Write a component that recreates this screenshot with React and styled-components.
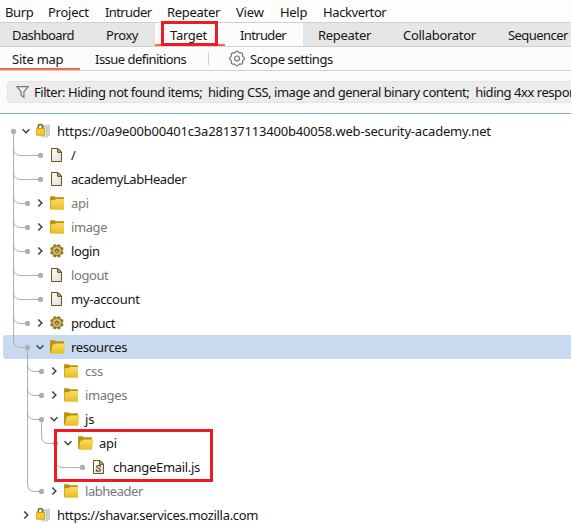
import React from "react";
import styled, { createGlobalStyle } from "styled-components";

const Global = createGlobalStyle`
  * { box-sizing: border-box; }
  html, body { margin: 0; padding: 0; background: #fff; overflow: hidden; }
  svg { flex: none; }
`;

const Window = styled.div`
  position: relative;
  width: 571px;
  height: 532px;
  overflow: hidden;
  background: #fff;
  color: #151515;
  font-family: "Noto Sans", sans-serif;
  font-size: 13px;
  line-height: 18px;
  white-space: pre;
`;

const MenuBar = styled.nav`
  display: flex;
  height: 23px;
  padding: 3px 0 0 5px;
  background: #fdfdfd;
  border-bottom: 1px solid #cdd2d2;
`;

const MenuItem = styled.span`
  flex: none;
  width: ${(p) => p.$w}px;
  letter-spacing: ${(p) => p.$ls || 0}px;
`;

const TabBar = styled.div`
  display: flex;
  height: 24px;
  background: #e6e6e6;
  border-bottom: 1px solid #cdd2d2;
`;

const Tab = styled.div`
  flex: none;
  width: ${(p) => p.$w}px;
  height: 23px;
  padding: 3px 0 0 ${(p) => p.$pad || 15}px;
  background: ${(p) => (p.$light ? "#fcfcfc" : "transparent")};
  border-bottom: 2px solid ${(p) => (p.$active ? "#ff6633" : "transparent")};
  letter-spacing: ${(p) => p.$ls || 0}px;
`;

const SubBar = styled.div`
  display: flex;
  height: 24px;
  background: #fcfcfc;
  border-bottom: 1px solid #cdd2d2;
`;

const SubTab = styled.div`
  width: ${(p) => p.$w}px;
  height: 23px;
  padding: 3px 0 0 ${(p) => p.$pad}px;
  border-bottom: 2px solid ${(p) => (p.$active ? "#ff6633" : "transparent")};
  letter-spacing: ${(p) => p.$ls || 0}px;
`;

const Divider = styled.div`
  width: 1px;
  height: 13px;
  margin: 5px 20px 0 0;
  background: #cdd2d2;
`;

const Scope = styled.div`
  display: flex;
  gap: 5px;
  padding-top: 3px;
  letter-spacing: -0.4px;
`;

const FilterPane = styled.div`
  height: 43px;
  padding: 10px 0 0 7px;
  background: #fbfbfb;
  border-bottom: 1px solid #7ba7cf;
`;

const Filter = styled.div`
  display: flex;
  align-items: center;
  gap: 5px;
  width: 570px;
  height: 22px;
  padding-left: 8px;
  background: #ececec;
  border: 1px solid #e4e4e4;
  border-radius: 4px;
  letter-spacing: -0.46px;
`;

const Tree = styled.div`
  padding-top: 5px;
`;

const Row = styled.div`
  display: flex;
  align-items: center;
  height: 24px;
  margin-left: 3px;
  background: ${(p) => (p.$selected ? "#c9daf0" : "transparent")};
  border-radius: 4px 0 0 4px;
`;

const GuideSvg = styled.svg`
  flex: none;
  margin-left: -3px;
`;

const Slot = styled.div`
  display: flex;
  flex: none;
  width: ${(p) => p.$w}px;
  height: 24px;
  align-items: center;
`;

const Label = styled.span`
  color: ${(p) => (p.$dim ? "#77777a" : "#151515")};
  letter-spacing: ${(p) => p.$ls || 0}px;
`;

const Highlight = styled.div`
  position: absolute;
  left: ${(p) => p.$x}px;
  top: ${(p) => p.$y}px;
  width: ${(p) => p.$w}px;
  height: ${(p) => p.$h}px;
  border: 3px solid #ed1c24;
`;

function Guides({ depth, leaf, lines = [], elbow, dot = true, down }) {
  const width = (leaf ? 32 : 20) + 14 * depth;
  const dotX = (leaf ? 26.5 : 13.5) + 14 * depth;
  const parentX = -0.5 + 14 * depth;
  return (
    <GuideSvg width={width} height="24" fill="none" stroke="#afafaf">
      {lines.map((d) => (
        <path key={d} d={`M${13.5 + 14 * d} 0V24`} />
      ))}
      {elbow && <path d={`M${parentX} 0V5Q${parentX} 12.5 ${parentX + 7.5} 12.5H${dotX}`} />}
      {down && <path d={`M${dotX} 12V24`} />}
      {dot && <circle cx={dotX} cy="12.4" r="2.6" fill="#afafaf" stroke="none" />}
    </GuideSvg>
  );
}

function Chevron({ open }) {
  return (
    <svg width="12" height="12" fill="none" stroke="#3f4142" strokeWidth="1.5">
      <path d={open ? "M2.5 4.2L6 7.7L9.5 4.2" : "M4.3 2.5L7.8 6L4.3 9.5"} />
    </svg>
  );
}

function Folder({ open }) {
  return (
    <svg width="17" height="16">
      <defs>
        <linearGradient id="folderFill" x1="0" y1="0" x2="0" y2="1">
          <stop offset="0" stopColor="#f8dc62" />
          <stop offset="1" stopColor="#e9bd25" />
        </linearGradient>
      </defs>
      <path d="M0 1.9Q0 1.2 .7 1.2H4.5L5.7 2.3H13.2Q14 2.3 14 3.2V14H0Z" fill="#bd910c" />
      <path
        d={open ? "M4.6 5.6L5.8 4.6H15.6L13.8 14.8H.6L2.6 5.6Z" : "M.6 5.2H4.8L6 4H14V14.8H.6Z"}
        fill="url(#folderFill)"
      />
    </svg>
  );
}

function Page({ script }) {
  return (
    <svg width="14" height="16">
      <defs>
        <linearGradient id="pageFill" x1="0" y1="0" x2="1" y2="1">
          <stop offset="0" stopColor="#ffffff" />
          <stop offset="1" stopColor="#dedbe2" />
        </linearGradient>
      </defs>
      <path d="M1.5 1.5H8L11.5 5V14.5H1.5Z" fill="url(#pageFill)" stroke="#68561c" />
      <path d="M7.6 1.5V5.4H11.5Z" fill="#cbb873" stroke="#68561c" />
      {script && (
        <path
          d="M8.4 6.2V8.2M8.2 7.2C7.4 6.1 4.7 6.2 4.7 7.9C4.7 9.6 8.3 9 8.3 10.9C8.3 12.7 5.4 12.5 4.5 11.4M4.3 10.3V12.6"
          fill="none"
          stroke="#514012"
          strokeWidth="1.1"
        />
      )}
    </svg>
  );
}

const TEETH = [0, 45, 90, 135, 180, 225, 270, 315];

function GoldGear() {
  return (
    <svg width="15" height="16">
      <g transform="translate(6.9 7.8)">
        {TEETH.map((a) => (
          <rect key={a} x="-1.6" y="-6.8" width="3.2" height="4" rx="0.9" fill="#94782a" transform={`rotate(${a + 22.5})`} />
        ))}
        <circle r="5" fill="#bb9b3e" stroke="#8a6c20" strokeWidth="0.8" />
        <circle r="3.4" fill="#d0b563" stroke="#e2cf88" strokeWidth="0.7" />
        <circle r="1.6" fill="#a58535" stroke="#6a5110" strokeWidth="0.9" />
        <circle cy="0.5" r="0.6" fill="#fff8da" />
      </g>
    </svg>
  );
}

function SecureHost() {
  return (
    <svg width="15" height="16">
      <path d="M5 3.5L7.5 1.7H13.7V12L11.5 14.2H5Z" fill="#d9d9d9" />
      <path d="M5.5 3.8H10.8V14H5.5Z" fill="#e4e4e4" stroke="#c0c0c0" strokeWidth="0.6" />
      <path d="M10.8 4L13.6 2V12L10.8 14Z" fill="#d2d2d2" stroke="#c0c0c0" strokeWidth="0.6" />
      <path d="M2.2 7V4C2.2 .7 6.8 .7 6.8 4V7" fill="none" stroke="#7c681c" strokeWidth="1.5" />
      <rect x="0.4" y="5.5" width="8.2" height="6.7" rx="0.5" fill="#f7ca27" stroke="#c79811" strokeWidth="0.8" />
    </svg>
  );
}

function Cog() {
  const points = Array.from({ length: 64 }, (_, i) => {
    const a = (i / 64) * Math.PI * 2;
    const r = 6.75 + 0.6 * Math.tanh(2.5 * Math.cos(8 * a));
    return `${(8 + r * Math.cos(a)).toFixed(2)},${(8.5 + r * Math.sin(a)).toFixed(2)}`;
  }).join(" ");
  return (
    <svg width="16" height="17" fill="none" stroke="#777777" strokeWidth="1.2">
      <polygon points={points} />
      <circle cx="8" cy="8.5" r="2.5" />
    </svg>
  );
}

function Funnel() {
  return (
    <svg width="13" height="14" fill="none" stroke="#777777" strokeWidth="1.2">
      <path d="M0.9 1.6H12.1L7.9 7V12.2L5.1 10.4V7Z" />
    </svg>
  );
}

const ICONS = {
  host: <SecureHost />,
  page: <Page />,
  script: <Page script />,
  folder: <Folder />,
  folderOpen: <Folder open />,
  gear: <GoldGear />,
};

const ROWS = [
  { text: "https://0a9e00b00401c3a28137113400b40058.web-security-academy.net", ls: -0.18, depth: 0, icon: "host", open: true, down: true },
  { text: "/", depth: 1, icon: "page", leaf: true, elbow: true, lines: [0] },
  { text: "academyLabHeader", ls: -0.43, depth: 1, icon: "page", leaf: true, elbow: true, lines: [0] },
  { text: "api", ls: -0.3, depth: 1, icon: "folder", dim: true, elbow: true, lines: [0] },
  { text: "image", ls: -0.4, depth: 1, icon: "folder", dim: true, elbow: true, lines: [0] },
  { text: "login", ls: -0.4, depth: 1, icon: "gear", elbow: true, lines: [0] },
  { text: "logout", ls: -0.4, depth: 1, icon: "page", leaf: true, dim: true, elbow: true, lines: [0] },
  { text: "my-account", ls: -0.28, depth: 1, icon: "page", leaf: true, elbow: true, lines: [0] },
  { text: "product", ls: -0.6, depth: 1, icon: "gear", elbow: true, lines: [0] },
  { text: "resources", ls: -0.38, depth: 1, icon: "folderOpen", open: true, selected: true, elbow: true, down: true },
  { text: "css", ls: -0.2, depth: 2, icon: "folder", dim: true, elbow: true, lines: [1] },
  { text: "images", ls: -0.4, depth: 2, icon: "folder", dim: true, elbow: true, lines: [1] },
  { text: "js", depth: 2, icon: "folderOpen", open: true, elbow: true, lines: [1], down: true },
  { text: "api", ls: -0.3, depth: 3, icon: "folderOpen", open: true, elbow: true, lines: [1], down: true },
  { text: "changeEmail.js", ls: -0.32, depth: 4, icon: "script", leaf: true, elbow: true, lines: [1] },
  { text: "labheader", ls: -0.46, depth: 2, icon: "folder", dim: true, elbow: true },
  { text: "https://shavar.services.mozilla.com", ls: -0.32, depth: 0, icon: "host", dot: false },
];

const MENU = [
  ["Burp", 43, -0.4], ["Project", 57, -0.25], ["Intruder", 62, -0.6], ["Repeater", 69, -0.3],
  ["View", 44, -0.2], ["Help", 43, -0.3], ["Hackvertor", 90, -0.4],
];

const TABS = [
  { text: "Dashboard", w: 90, pad: 12, ls: -0.6 },
  { text: "Proxy", w: 65, pad: 16, ls: -0.4 },
  { text: "Target", w: 70, light: true, active: true, ls: -0.3 },
  { text: "Intruder", w: 78, light: true, ls: -0.65 },
  { text: "Repeater", w: 84, ls: -0.3 },
  { text: "Collaborator", w: 105, pad: 16, ls: -0.28 },
  { text: "Sequencer", w: 79, pad: 16, ls: -0.55 },
];

export default function App() {
  return (
    <Window>
      <Global />
      <MenuBar>
        {MENU.map(([text, w, ls]) => (
          <MenuItem key={text} $w={w} $ls={ls}>{text}</MenuItem>
        ))}
      </MenuBar>
      <TabBar>
        {TABS.map((t) => (
          <Tab key={t.text} $w={t.w} $pad={t.pad} $light={t.light} $active={t.active} $ls={t.ls}>{t.text}</Tab>
        ))}
      </TabBar>
      <SubBar>
        <SubTab $w={80} $pad={12} $ls={-0.25} $active>Site map</SubTab>
        <SubTab $w={128} $pad={15} $ls={-0.53}>Issue definitions</SubTab>
        <Divider />
        <Scope><Cog />Scope settings</Scope>
      </SubBar>
      <FilterPane>
        <Filter>
          <Funnel />
          <span>Filter: Hiding not found items;  hiding CSS, image and general binary content;  hiding 4xx respon</span>
        </Filter>
      </FilterPane>
      <Tree>
        {ROWS.map((r, i) => (
          <Row key={i} $selected={r.selected}>
            <Guides {...r} />
            {!r.leaf && <Slot $w={12}><Chevron open={r.open} /></Slot>}
            <Slot $w={4} />
            <Slot $w={21}>{ICONS[r.icon]}</Slot>
            <Label $dim={r.dim} $ls={r.ls}>{r.text}</Label>
          </Row>
        ))}
      </Tree>
      <Highlight $x={161} $y={21} $w={57} $h={25} />
      <Highlight $x={54} $y={429} $w={159} $h={53} />
    </Window>
  );
}
